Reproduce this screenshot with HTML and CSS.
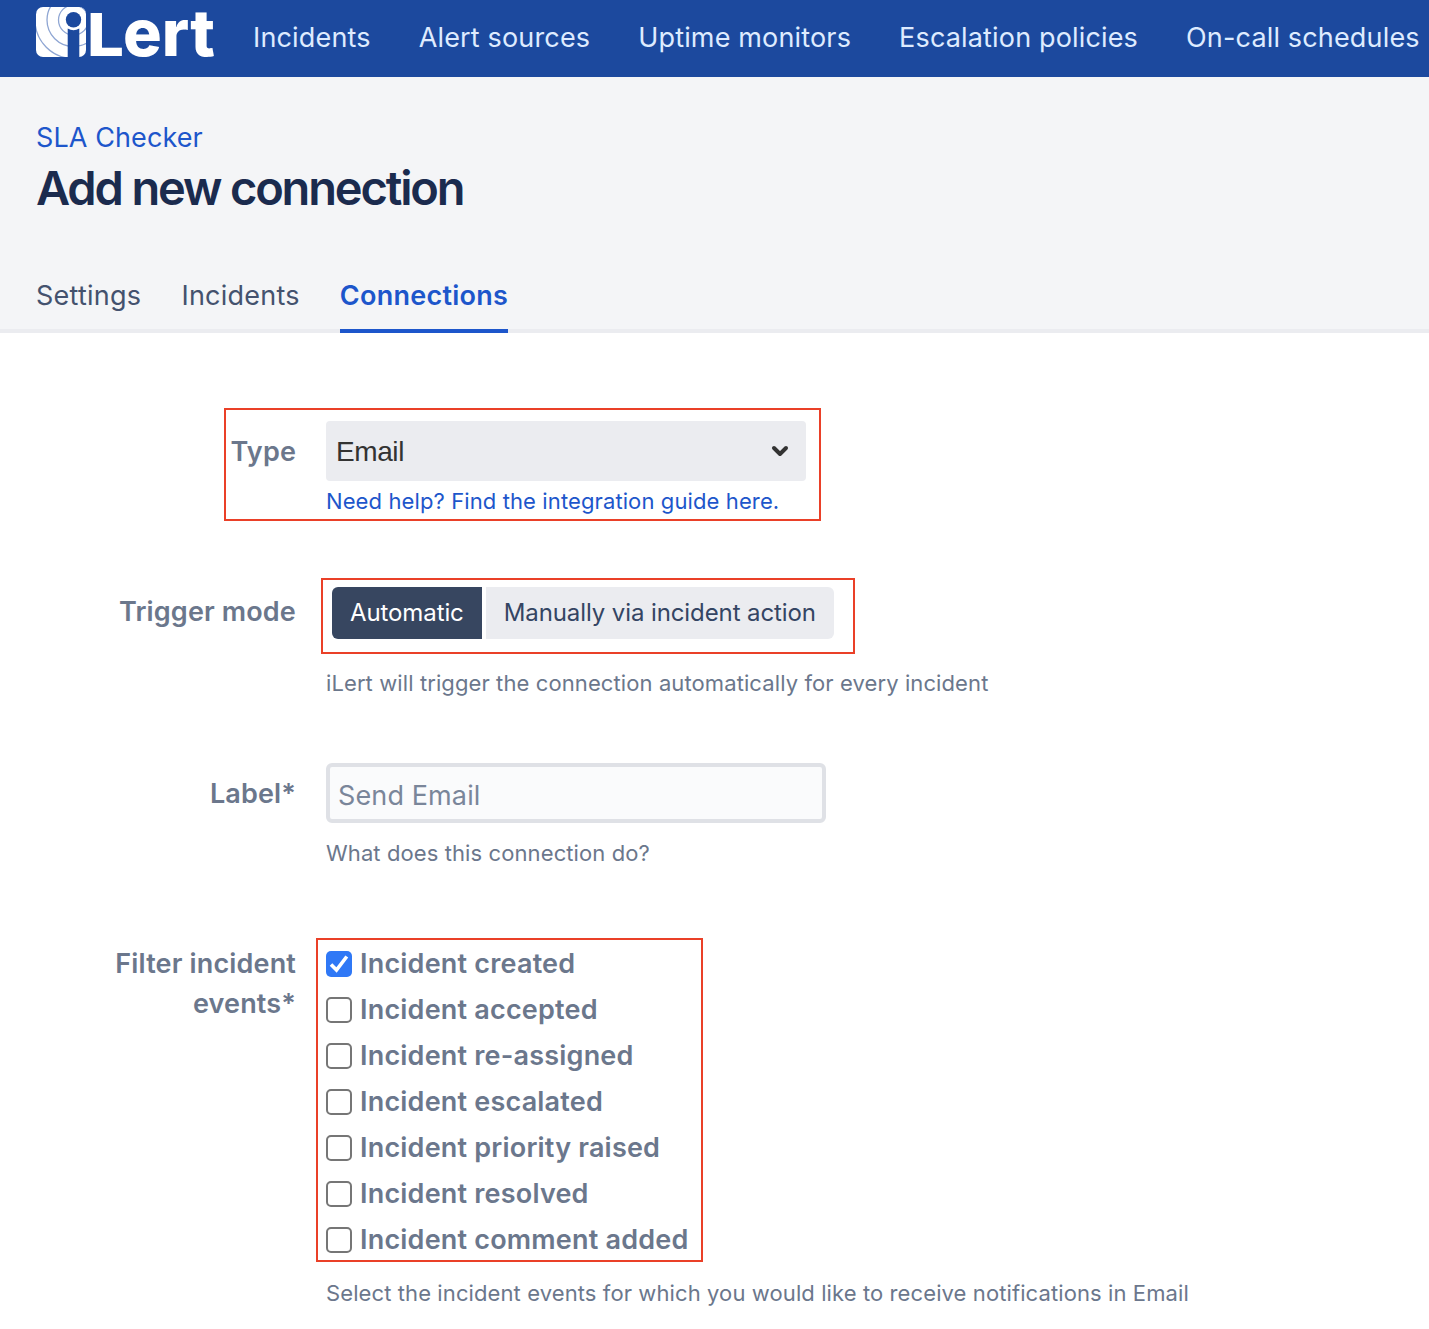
FILE: index.html
```html
<!DOCTYPE html>
<html lang="en">
<head>
<meta charset="utf-8">
<title>Add new connection</title>
<link rel="stylesheet" href="styles.css">
</head>
<body>
<header class="topbar">
  <svg class="logo" width="180" height="60" viewBox="0 0 180 60" role="img" aria-label="iLert">
    <defs><clipPath id="badge"><rect x="0" y="7" width="50" height="50" rx="7"/></clipPath></defs>
    <g clip-path="url(#badge)">
      <rect class="logo-white" x="0" y="7" width="50" height="50"/>
      <g class="logo-rings">
        <circle cx="37.5" cy="20" r="15"/>
        <circle cx="37.5" cy="20" r="26.5"/>
        <circle cx="37.5" cy="20" r="38.5"/>
      </g>
      <path class="logo-blue" d="M31.700 28.500Q37.500 32 43.300 28.500V57H31.700z"/>
      <circle class="logo-blue" cx="37.500" cy="19.800" r="7.700"/>
    </g>
    <text class="logo-l" x="51" y="56" textLength="37" lengthAdjust="spacingAndGlyphs">L</text>
    <text class="logo-ert" x="87" y="56" textLength="92" lengthAdjust="spacingAndGlyphs">ert</text>
  </svg>
  <nav class="nav">
    <a>Incidents</a><a>Alert sources</a><a>Uptime monitors</a><a>Escalation policies</a><a>On-call schedules</a>
  </nav>
</header>
<section class="page-head">
  <a class="crumb">SLA Checker</a>
  <h1 class="title">Add new connection</h1>
  <div class="tabs">
    <a class="tab">Settings</a><a class="tab">Incidents</a><a class="tab active">Connections</a>
  </div>
</section>
<main class="form">
  <div class="row row-type">
    <div class="label">Type</div>
    <div class="field">
      <div class="select"><span>Email</span>
        <svg width="20" height="14" viewBox="0 0 20 14"><path d="M4 4l6 6 6-6"/></svg>
      </div>
      <a class="guide">Need help? Find the integration guide here.</a>
    </div>
    <span class="mark mark-type"></span>
  </div>
  <div class="row row-mode">
    <div class="label">Trigger mode</div>
    <div class="field">
      <div class="segmented"><button class="seg on">Automatic</button><button class="seg">Manually via incident action</button></div>
      <p class="help">iLert will trigger the connection automatically for every incident</p>
    </div>
    <span class="mark mark-mode"></span>
  </div>
  <div class="row row-label">
    <div class="label">Label*</div>
    <div class="field">
      <input class="input" type="text" placeholder="Send Email">
      <p class="help">What does this connection do?</p>
    </div>
  </div>
  <div class="row row-events">
    <div class="label">Filter incident<br>events*</div>
    <div class="field">
      <div class="checks">
        <label class="check"><span class="box checked"><svg width="26" height="26" viewBox="0 0 26 26"><path d="M5 13.500l5.500 5.500L20.800 5.500"/></svg></span><span class="check-text">Incident created</span></label>
        <label class="check"><span class="box"></span><span class="check-text">Incident accepted</span></label>
        <label class="check"><span class="box"></span><span class="check-text">Incident re-assigned</span></label>
        <label class="check"><span class="box"></span><span class="check-text">Incident escalated</span></label>
        <label class="check"><span class="box"></span><span class="check-text">Incident priority raised</span></label>
        <label class="check"><span class="box"></span><span class="check-text">Incident resolved</span></label>
        <label class="check"><span class="box"></span><span class="check-text">Incident comment added</span></label>
      </div>
      <p class="help">Select the incident events for which you would like to receive notifications in Email</p>
    </div>
    <span class="mark mark-events"></span>
  </div>
</main>
</body>
</html>
```
FILE: styles.css
```css
* { box-sizing: border-box; }
body { margin: 0; height: 1329px; overflow: hidden; background: #fff; font-family: Inter, "Liberation Sans", sans-serif; font-size: 27px; }
.topbar { height: 77px; background: #1c499e; display: flex; padding-left: 36px; }
.logo { flex: none; overflow: visible; }
.logo-white { fill: #fff; }
.logo-blue { fill: #1c499e; }
.logo-rings { fill: none; stroke: #8fa6d3; stroke-width: 1.3; }
.logo text { fill: #fff; font-weight: 800; }
.logo-l { font-size: 59px; }
.logo-ert { font-size: 65px; }
.nav { display: flex; gap: 48px; padding-left: 37px; color: #deebff; line-height: 75px; letter-spacing: 0.16px; white-space: nowrap; }
.page-head { height: 256px; background: #f4f5f7; border-bottom: 4px solid #ebecf0; padding: 41px 36px 0; display: flex; flex-direction: column; }
.crumb { color: #1d56cb; line-height: 40px; letter-spacing: 0.1px; }
.title { margin: 2px 0 0; font-size: 47px; line-height: 56px; font-weight: 600; letter-spacing: -2.15px; color: #1b2b4e; }
.tabs { display: flex; gap: 40px; margin-top: 57px; letter-spacing: 0.25px; }
.tab { height: 60px; line-height: 45px; color: #44526e; border-bottom: 4px solid transparent; }
.tab.active { color: #1d56cb; font-weight: 600; border-color: #1d56cb; }
.form { padding-top: 88px; }
.row { position: relative; display: grid; grid-template-columns: 296px 1fr; column-gap: 30px; }
.row-type { height: 166px; }
.row-mode { height: 176px; }
.row-label { height: 178px; }
.label { text-align: right; color: #6b778c; font-weight: 600; line-height: 40px; letter-spacing: 0.15px; }
.row-type .label, .row-label .label { padding-top: 11px; }
.row-mode .label { padding-top: 5px; }
.row-events .label { padding-top: 3px; }
.select { width: 480px; height: 60px; border-radius: 4px; background: #ebecf0; color: #333; padding: 0 16px 0 10px; display: flex; align-items: center; justify-content: space-between; }
.select span { font-family: "Liberation Sans", sans-serif; font-size: 28px; letter-spacing: -0.4px; padding-top: 2px; }
.select path { fill: none; stroke: #333; stroke-width: 4; stroke-linecap: round; stroke-linejoin: round; }
.guide { display: block; color: #1d56cb; font-size: 22px; line-height: 40px; letter-spacing: 0.11px; }
.segmented { display: flex; gap: 4px; padding-left: 6px; }
.seg { border: 0; padding: 0 18px; height: 52px; background: #ebecf0; color: #344563; font: 24px/52px Inter, sans-serif; letter-spacing: -0.1px; border-radius: 0 6px 6px 0; white-space: nowrap; }
.seg.on { background: #374660; color: #fff; border-radius: 6px 0 0 6px; }
.help { margin: 0; color: #6b778c; font-size: 22px; line-height: 30px; letter-spacing: 0.1px; white-space: nowrap; }
.row-mode .help { margin-top: 29px; }
.row-label .help { margin-top: 15px; }
.row-events .help { margin-top: 15px; }
.input { display: block; width: 500px; height: 60px; border: 4px solid #dfe1e6; border-radius: 6px; background: #fafbfc; padding: 4px 8px 0; font: 27px Inter, sans-serif; letter-spacing: 0.12px; }
.input::placeholder { color: #7a869a; opacity: 1; }
.check { display: flex; align-items: center; gap: 8px; height: 46px; color: #6b778c; font-weight: 600; letter-spacing: 0.2px; white-space: nowrap; }
.check-text { padding-bottom: 2px; }
.box { width: 26px; height: 26px; border: 2px solid #767676; border-radius: 5px; }
.box.checked { border: 0; background: #2f78f6; }
.box svg { display: block; }
.box path { fill: none; stroke: #fff; stroke-width: 3.600; }
.mark { position: absolute; border: 2px solid #ea4028; pointer-events: none; }
.mark-type { left: 224px; top: -13px; width: 597px; height: 113px; }
.mark-mode { left: 321px; top: -9px; width: 534px; height: 76px; }
.mark-events { left: 316px; top: -3px; width: 387px; height: 324px; }
```
